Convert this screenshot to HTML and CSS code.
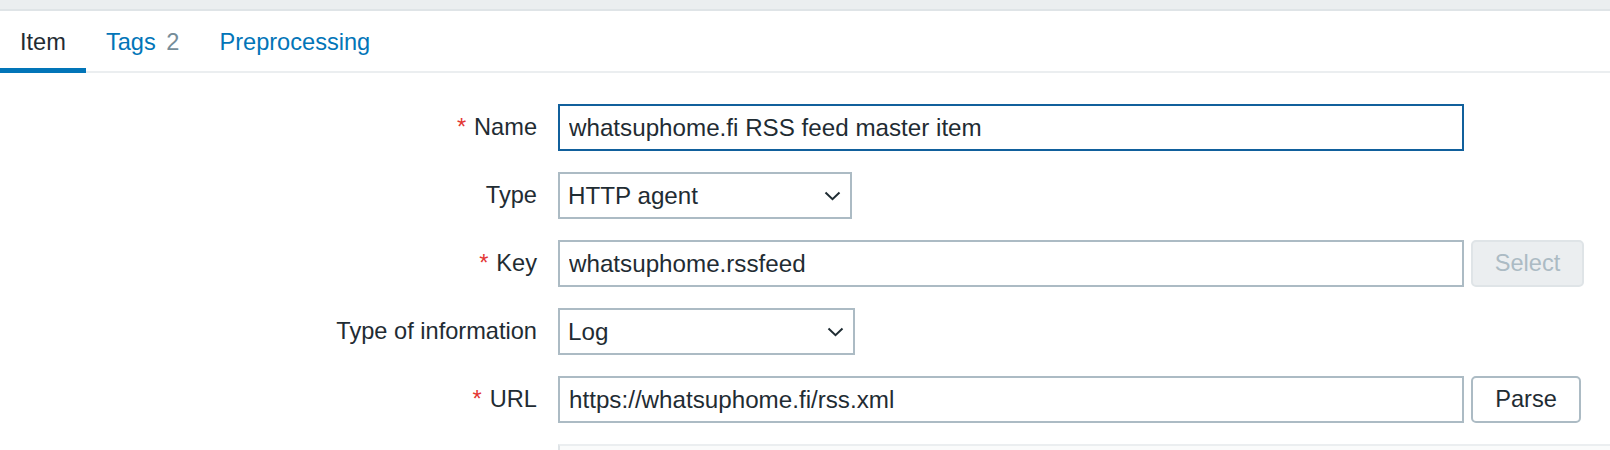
FILE: index.html
```html
<!DOCTYPE html>
<html>
<head>
<meta charset="utf-8">
<link rel="stylesheet" href="styles.css">
</head>
<body>
<div class="topbar"></div>
<ul class="tabs">
  <li class="tab active"><span class="tab-label">Item</span></li>
  <li class="tab"><span class="tab-link">Tags</span> <span class="tab-count">2</span></li>
  <li class="tab"><span class="tab-link">Preprocessing</span></li>
</ul>
<div class="form">
  <div class="label"><span class="req">*</span>Name</div>
  <div class="control"><input class="textbox focused" type="text" value="whatsuphome.fi RSS feed master item"></div>

  <div class="label">Type</div>
  <div class="control">
    <div class="select select-type"><span>HTTP agent</span>
      <svg class="chevron" width="17" height="10" viewBox="0 0 17 10"><path d="M1.5 1.5 L8.5 8.2 L15.5 1.5" fill="none" stroke="#1f2c33" stroke-width="2"/></svg>
    </div>
  </div>

  <div class="label"><span class="req">*</span>Key</div>
  <div class="control">
    <input class="textbox" type="text" value="whatsuphome.rssfeed">
    <button class="btn btn-disabled">Select</button>
  </div>

  <div class="label">Type of information</div>
  <div class="control">
    <div class="select select-info"><span>Log</span>
      <svg class="chevron" width="17" height="10" viewBox="0 0 17 10"><path d="M1.5 1.5 L8.5 8.2 L15.5 1.5" fill="none" stroke="#1f2c33" stroke-width="2"/></svg>
    </div>
  </div>

  <div class="label"><span class="req">*</span>URL</div>
  <div class="control">
    <input class="textbox" type="text" value="https://whatsuphome.fi/rss.xml">
    <button class="btn btn-grey">Parse</button>
  </div>

  <div class="label"></div>
  <div class="control"><div class="table-box"></div></div>
</div>
</body>
</html>
```
FILE: styles.css
```css
html, body {
  margin: 0;
  padding: 0;
  background: #ffffff;
  overflow: hidden;
}
body {
  font-family: "Liberation Sans", Arial, Helvetica, sans-serif;
  color: #1f2c33;
  font-size: 23.6px;
}
.topbar {
  height: 9px;
  background: #ebeef0;
  border-bottom: 2px solid #dfe4e7;
}
.tabs {
  list-style: none;
  margin: 0;
  padding: 0;
  display: flex;
  height: 60px;
  border-bottom: 2px solid #ebeef0;
}
.tab {
  box-sizing: border-box;
  height: 62px;
  margin-bottom: -2px;
  padding: 17px 20px 0;
  line-height: 28px;
  font-size: 23.6px;
  border-bottom: 5px solid transparent;
  white-space: nowrap;
}
.tab.active {
  border-bottom-color: #0275b8;
}
.tab-label { color: #1f2c33; }
.tab-link { color: #0275b8; }
.tab-count {
  color: #768d99;
  margin-left: 4px;
}

.form {
  display: grid;
  grid-template-columns: 537px 1fr;
  column-gap: 21px;
  row-gap: 21px;
  grid-auto-rows: 47px;
  padding-top: 31px;
}
.label {
  display: flex;
  justify-content: flex-end;
  align-items: center;
  white-space: nowrap;
}
.req {
  color: #e33734;
  margin-right: 8px;
}
.control {
  display: flex;
  align-items: center;
  gap: 7px;
}
.textbox {
  box-sizing: border-box;
  width: 906px;
  height: 47px;
  margin: 0;
  border: 2px solid #acbbc4;
  border-radius: 0;
  padding: 0 9px;
  font-family: "Liberation Sans", Arial, Helvetica, sans-serif;
  font-size: 24.2px;
  color: #1f2c33;
  background: #ffffff;
  outline: none;
}
.textbox.focused {
  border-color: #11609c;
}
.select {
  box-sizing: border-box;
  height: 47px;
  border: 2px solid #acbbc4;
  padding: 0 9px 0 8px;
  display: flex;
  align-items: center;
  justify-content: space-between;
  background: #ffffff;
  font-size: 24.2px;
}
.select-type { width: 294px; }
.select-info { width: 297px; }
.chevron { display: block; }
.btn {
  box-sizing: border-box;
  height: 47px;
  border-radius: 5px;
  font-family: "Liberation Sans", Arial, Helvetica, sans-serif;
  font-size: 23.6px;
  padding: 0;
  margin: 0;
}
.btn-disabled {
  width: 113px;
  background: #ebeef0;
  border: 2px solid #dfe4e7;
  color: #acbbc4;
}
.btn-grey {
  width: 110px;
  background: #ffffff;
  border: 2px solid #acbbc4;
  color: #1f2c33;
}
.table-box {
  align-self: stretch;
  flex: 1;
  border-top: 2px solid #ebeef0;
  border-left: 2px solid #dfe4e7;
  background: #fafbfb;
}
```
